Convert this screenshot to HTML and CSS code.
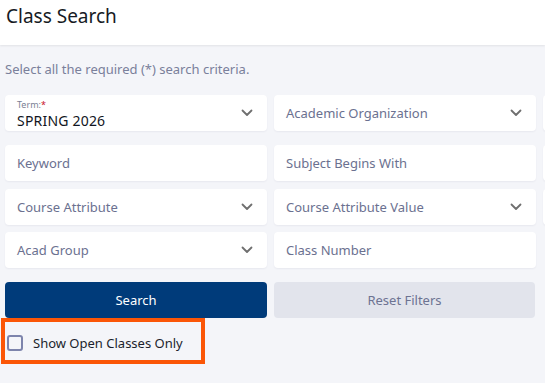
FILE: index.html
```html
<!DOCTYPE html>
<html>
<head>
<meta charset="utf-8">
<link rel="stylesheet" href="styles.css">
</head>
<body>
<div class="page">
  <header class="header"><h1 class="title">Class Search</h1></header>
  <main class="content">
    <p class="hint">Select all the required (*) search criteria.</p>
    <div class="row row-1">
      <div class="field select term">
        <div class="term-text">
          <span class="term-label">Term:<span class="req">*</span></span>
          <span class="term-value">SPRING 2026</span>
        </div>
        <svg class="chev" width="12" height="8" viewBox="0 0 12 8"><path d="M1.5 1.5 L6 6 L10.5 1.5" fill="none" stroke="#6f6f6f" stroke-width="1.8" stroke-linecap="round" stroke-linejoin="round"/></svg>
      </div>
      <div class="field select"><span class="ph">Academic Organization</span>
        <svg class="chev" width="12" height="8" viewBox="0 0 12 8"><path d="M1.5 1.5 L6 6 L10.5 1.5" fill="none" stroke="#6f6f6f" stroke-width="1.8" stroke-linecap="round" stroke-linejoin="round"/></svg>
      </div>
      <div class="field"></div>
    </div>
    <div class="row row-2">
      <div class="field"><span class="ph">Keyword</span></div>
      <div class="field"><span class="ph">Subject Begins With</span></div>
      <div class="field"></div>
    </div>
    <div class="row row-3">
      <div class="field select"><span class="ph">Course Attribute</span>
        <svg class="chev" width="12" height="8" viewBox="0 0 12 8"><path d="M1.5 1.5 L6 6 L10.5 1.5" fill="none" stroke="#6f6f6f" stroke-width="1.8" stroke-linecap="round" stroke-linejoin="round"/></svg>
      </div>
      <div class="field select"><span class="ph">Course Attribute Value</span>
        <svg class="chev" width="12" height="8" viewBox="0 0 12 8"><path d="M1.5 1.5 L6 6 L10.5 1.5" fill="none" stroke="#6f6f6f" stroke-width="1.8" stroke-linecap="round" stroke-linejoin="round"/></svg>
      </div>
      <div class="field"></div>
    </div>
    <div class="row row-4">
      <div class="field select"><span class="ph">Acad Group</span>
        <svg class="chev" width="12" height="8" viewBox="0 0 12 8"><path d="M1.5 1.5 L6 6 L10.5 1.5" fill="none" stroke="#6f6f6f" stroke-width="1.8" stroke-linecap="round" stroke-linejoin="round"/></svg>
      </div>
      <div class="field"><span class="ph">Class Number</span></div>
    </div>
    <div class="row row-btn">
      <button class="btn btn-primary">Search</button>
      <button class="btn btn-secondary">Reset Filters</button>
    </div>
    <div class="open-only">
      <span class="checkbox"></span>
      <span class="open-label">Show Open Classes Only</span>
    </div>
  </main>
</div>
</body>
</html>
```
FILE: styles.css
```css
* { box-sizing: border-box; }
html, body { margin: 0; padding: 0; }
body {
  width: 545px;
  height: 383px;
  overflow: hidden;
  background: #f4f5f9;
  font-family: "Noto Sans", "Liberation Sans", sans-serif;
}
.page { width: 545px; height: 383px; overflow: hidden; }
.header {
  height: 45px;
  background: #ffffff;
  box-shadow: 0 1px 2px rgba(0,0,0,0.08);
  padding: 3px 0 0 6px;
}
.title {
  margin: 0;
  font-size: 19px;
  font-weight: 400;
  color: #161a24;
  line-height: 27px;
}
.content { padding: 0 0 0 5px; }
.hint {
  margin: 0;
  padding-top: 15px;
  height: 50px;
  font-size: 13px;
  line-height: 18px;
  color: #7a809b;
}
.row {
  display: flex;
  gap: 7px;
  width: 700px;
}
.row-2 { margin-top: 14px; }
.row-3 { margin-top: 8px; }
.row-4 { margin-top: 7px; }
.row-btn { margin-top: 14px; }
.field {
  flex: 0 0 262px;
  height: 36px;
  background: #ffffff;
  border-radius: 4px;
  box-shadow: 0 1px 2px rgba(30,40,80,0.06);
  display: flex;
  align-items: center;
  padding: 0 11px 0 12px;
}
.ph {
  font-size: 13px;
  color: #6b7190;
  flex: 1;
}
.select .chev { flex: 0 0 auto; margin-right: 3px; }
.term-text { flex: 1; display: flex; flex-direction: column; padding-top: 2px; }
.term-label {
  font-size: 9px;
  line-height: 12px;
  height: 12px;
  color: #7b7f94;
}
.req { color: #c8102e; }
.term-value {
  font-size: 14px;
  line-height: 19px;
  color: #111522;
  letter-spacing: 0.2px;
}
.btn {
  flex: 0 0 262px;
  height: 36px;
  border: none;
  border-radius: 4px;
  font-family: inherit;
  font-size: 13px;
  padding: 0;
}
.btn-primary { background: #003b7a; color: #ffffff; }
.btn-secondary { background: #e2e4ec; color: #6d7392; flex-basis: 261px; }
.open-only {
  width: 204px;
  height: 46px;
  margin-left: -4px;
  border: 4px solid #fb5607;
  display: flex;
  align-items: center;
  padding: 3px 0 0 2px;
}
.checkbox {
  width: 16px;
  height: 16px;
  border: 2px solid #7d84ac;
  border-radius: 3px;
  background: #f4f5f9;
  margin-right: 10px;
}
.open-label { font-size: 13px; color: #1b1f2d; }
```
